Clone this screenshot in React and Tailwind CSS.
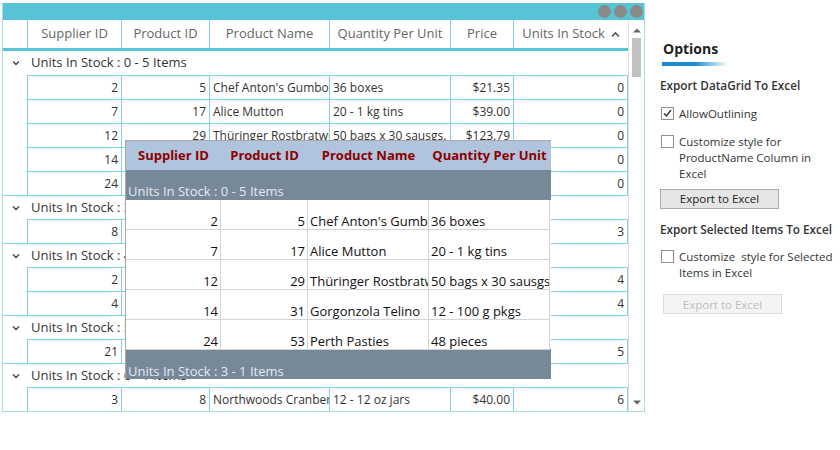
import React from "react";

const FONT = { fontFamily: '"Open Sans", "Noto Sans", sans-serif' };

const cols = [
  { key: "sid", title: "Supplier ID", w: "w-[94px]", align: "text-right" },
  { key: "pid", title: "Product ID", w: "w-[88px]", align: "text-right" },
  { key: "name", title: "Product Name", w: "w-[120px]", align: "text-left" },
  { key: "qty", title: "Quantity Per Unit", w: "w-[121px]", align: "text-left" },
  { key: "price", title: "Price", w: "w-[63px]", align: "text-right" },
  { key: "stock", title: "Units In Stock", w: "w-[114px]", align: "text-right" },
];

const rows = [
  { group: "Units In Stock : 0 - 5 Items" },
  { sid: 2, pid: 5, name: "Chef Anton's Gumbo Mix", qty: "36 boxes", price: "$21.35", stock: 0 },
  { sid: 7, pid: 17, name: "Alice Mutton", qty: "20 - 1 kg tins", price: "$39.00", stock: 0 },
  { sid: 12, pid: 29, name: "Thüringer Rostbratwurst", qty: "50 bags x 30 sausgs.", price: "$123.79", stock: 0 },
  { sid: 14, pid: 31, name: "Gorgonzola Telino", qty: "12 - 100 g pkgs", price: "$12.50", stock: 0 },
  { sid: 24, pid: 53, name: "Perth Pasties", qty: "48 pieces", price: "$32.80", stock: 0 },
  { group: "Units In Stock : 3 - 1 Items" },
  { sid: 8, pid: 68, name: "Scottish Longbreads", qty: "10 boxes x 8 pieces", price: "$12.50", stock: 3 },
  { group: "Units In Stock : 4 - 2 Items" },
  { sid: 2, pid: 66, name: "Louisiana Hot Spiced Okra", qty: "24 - 8 oz jars", price: "$17.00", stock: 4 },
  { sid: 4, pid: 74, name: "Longlife Tofu", qty: "5 kg pkg.", price: "$10.00", stock: 4 },
  { group: "Units In Stock : 5 - 1 Items" },
  { sid: 21, pid: 45, name: "Rogede sild", qty: "1k pkg.", price: "$9.50", stock: 5 },
  { group: "Units In Stock : 6 - 1 Items" },
  { sid: 3, pid: 8, name: "Northwoods Cranberry Sauce", qty: "12 - 12 oz jars", price: "$40.00", stock: 6 },
];

const previewRows = [
  [2, 5, "Chef Anton's Gumbo Mix", "36 boxes"],
  [7, 17, "Alice Mutton", "20 - 1 kg tins"],
  [12, 29, "Thüringer Rostbratwurst", "50 bags x 30 sausgs."],
  [14, 31, "Gorgonzola Telino", "12 - 100 g pkgs"],
  [24, 53, "Perth Pasties", "48 pieces"],
];
const previewW = ["w-[95px]", "w-[87px]", "w-[121px]", "w-[121px]"];

const Chevron = () => (
  <svg width="10" height="10" viewBox="0 0 10 10" className="text-[#444]">
    <path d="M2 3.5 L5 6.5 L8 3.5" fill="none" stroke="currentColor" strokeWidth="1.4" />
  </svg>
);

const CheckBox = ({ checked }) => (
  <div className="w-[13px] h-[13px] border border-[#8f8f8f] bg-white flex items-center justify-center shrink-0 mt-[1px]">
    {checked && (
      <svg width="11" height="11" viewBox="0 0 11 11">
        <path d="M2 5.5 L4.3 8 L9 2" fill="none" stroke="#333" strokeWidth="1.4" />
      </svg>
    )}
  </div>
);

const Grid = () => (
  <div className="relative w-[643px] h-[409px] border-x border-b border-[#a9dbe5] bg-white">
    {/* title bar */}
    <div className="h-[17px] bg-[#56c3d7] flex items-center justify-end gap-[3px] pr-[1px]">
      <span className="w-[13px] h-[13px] rounded-full bg-[#8a8a8a]" />
      <span className="w-[13px] h-[13px] rounded-full bg-[#8a8a8a]" />
      <span className="w-[13px] h-[13px] rounded-full bg-[#8a8a8a]" />
    </div>
    <div className="flex">
      <div className="w-[625px]">
        {/* header */}
        <div className="flex h-[31px] border-b-[3px] border-[#56c3d7] text-[13px] text-[#666]">
          <div className="w-[25px] border-r border-[#7fd2e0]" />
          {cols.map((c) => (
            <div
              key={c.key}
              className={`${c.w} border-r border-[#7fd2e0] flex items-center justify-center gap-[6px] last:border-r-0`}
            >
              {c.title}
              {c.key === "stock" && (
                <svg width="9" height="7" viewBox="0 0 9 7">
                  <path d="M1 5.5 L4.5 2 L8 5.5" fill="none" stroke="#555" strokeWidth="1.6" />
                </svg>
              )}
            </div>
          ))}
        </div>
        {/* body */}
        {rows.map((r, i) =>
          r.group ? (
            <div
              key={i}
              className={`h-[24px] flex items-center text-[13px] text-[#333] ${i > 0 ? "border-t border-[#7fd2e0]" : ""}`}
            >
              <div className="w-[25px] flex justify-center">
                <Chevron />
              </div>
              <span className="pl-[3px]">{r.group}</span>
            </div>
          ) : (
            <div key={i} className="h-[24px] flex text-[12px] text-[#333]">
              <div className="w-[25px] border-r border-[#7fd2e0]" />
              {cols.map((c) => (
                <div
                  key={c.key}
                  className={`${c.w} border-t border-r border-[#7fd2e0] px-[3px] flex items-center overflow-hidden whitespace-nowrap ${c.align === "text-right" ? "justify-end" : "justify-start"}`}
                >
                  {r[c.key]}
                </div>
              ))}
            </div>
          )
        )}
      </div>
      {/* scrollbar */}
      <div className="w-[18px] h-[391px] border-l border-[#e3e3e3] flex flex-col items-center bg-white">
        <svg width="8" height="5" viewBox="0 0 8 5" className="mt-[8px]">
          <path d="M0 4.5 L4 0.5 L8 4.5Z" fill="#666" />
        </svg>
        <div className="w-[9px] h-[39px] bg-[#c2c2c2] mt-[5px]" />
        <div className="flex-1" />
        <svg width="8" height="5" viewBox="0 0 8 5" className="mb-[6px]">
          <path d="M0 0.5 L4 4.5 L8 0.5Z" fill="#666" />
        </svg>
      </div>
    </div>

    {/* drag preview overlay */}
    <div className="absolute left-[122px] top-[137px] w-[426px] border-l border-t border-[#a8a8a8] bg-white">
      <div className="flex h-[29px] bg-[#b0c4de] text-[13px] font-bold text-[#8b0000]">
        {["Supplier ID", "Product ID", "Product Name", "Quantity Per Unit"].map((t, k) => (
          <div key={t} className={`${previewW[k]} flex items-center justify-center`}>
            {t}
          </div>
        ))}
      </div>
      <div className="h-[30px] bg-[#778899] text-[13px] leading-[16px] text-[#e4ebf2] flex items-end pl-[2px] pb-[1px]">
        Units In Stock : 0 - 5 Items
      </div>
      {previewRows.map((r, i) => (
        <div key={i} className="flex h-[30px] text-[13px] leading-[16px] text-[#111]">
          {r.map((v, k) => (
            <div
              key={k}
              className={`${previewW[k]} border-r border-b border-[#d3d3d3] flex items-end px-[2px] overflow-hidden whitespace-nowrap ${k < 2 ? "justify-end" : "justify-start"}`}
            >
              {v}
            </div>
          ))}
        </div>
      ))}
      <div className="h-[30px] bg-[#778899] text-[13px] leading-[16px] text-[#e4ebf2] flex items-end pl-[2px] -mt-px">
        Units In Stock : 3 - 1 Items
      </div>
    </div>
  </div>
);

const Options = () => (
  <div className="pl-[15px] pt-[35px] text-[11.5px] text-[#333] w-[190px]">
    <div className="pl-[3px] text-[14px] font-bold text-[#222]">Options</div>
    <div className="ml-[2px] mt-[3px] w-[66px] h-[4px] bg-gradient-to-r from-[#1b8cd0] via-[#1b8cd0] to-transparent" />
    <div className="mt-[11px] font-semibold text-[11.75px]">Export DataGrid To Excel</div>
    <div className="mt-[11px] flex gap-[5px] pl-[1px] leading-[16px]">
      <CheckBox checked />
      <span>AllowOutlining</span>
    </div>
    <div className="mt-[12px] flex gap-[5px] pl-[1px] leading-[16px]">
      <CheckBox />
      <span>
        Customize style for
        <br />
        ProductName Column in
        <br />
        Excel
      </span>
    </div>
    <button className="mt-[7px] w-[119px] h-[20px] bg-[#e5e5e5] border border-[#adadad] text-[11.5px] text-[#222] flex items-center justify-center">
      Export to Excel
    </button>
    <div className="mt-[12px] font-semibold text-[11.75px] whitespace-nowrap">Export Selected Items To Excel</div>
    <div className="mt-[11px] flex gap-[5px] pl-[1px] leading-[16px]">
      <CheckBox />
      <span className="whitespace-pre">
        {"Customize  style for Selected"}
        <br />
        Items in Excel
      </span>
    </div>
    <button className="mt-[13px] ml-[3px] w-[119px] h-[20px] bg-[#f4f4f4] border border-[#dcdcdc] text-[11.5px] text-[#bdbdbd] flex items-center justify-center">
      Export to Excel
    </button>
  </div>
);

export default function App() {
  return (
    <div className="w-[840px] h-[450px] bg-white flex pl-[2px] pt-[3px]" style={FONT}>
      <Grid />
      <Options />
    </div>
  );
}
